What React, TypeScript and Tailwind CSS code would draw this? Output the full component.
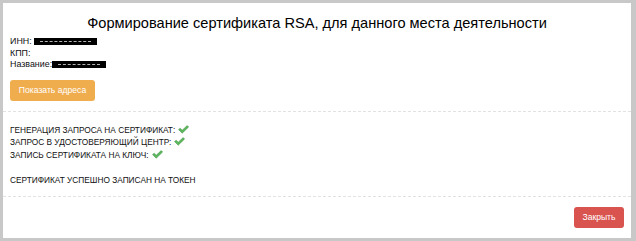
import React from 'react';

const font = { fontFamily: '"Liberation Sans", Tahoma, Arial, sans-serif' };

function Check() {
  return (
    <svg width="11" height="9" viewBox="0 0 11 9" className="inline-block ml-[3px] align-[-1px]">
      <path d="M0.5 4.6 L2.2 3.2 L4.2 5.2 L9.2 0.6 L10.6 2 L4.2 8.2 Z" fill="#5cb85c" stroke="#3d8b3d" strokeWidth="0.5" />
    </svg>
  );
}

function Redacted({ w }: { w: number }) {
  return (
    <span className="inline-block relative bg-black h-[7px] align-[-0.5px]" style={{ width: w }}>
      <span className="absolute left-[6px] right-[6px] top-[3px] h-0 border-t border-dashed border-white/70" />
    </span>
  );
}

const steps = [
  'ГЕНЕРАЦИЯ ЗАПРОСА НА СЕРТИФИКАТ:',
  'ЗАПРОС В УДОСТОВЕРЯЮЩИЙ ЦЕНТР:',
  'ЗАПИСЬ СЕРТИФИКАТА НА КЛЮЧ:',
];

export default function App() {
  return (
    <div className="w-[636px] h-[241px] bg-[#c8c8c8] pt-[3px] pl-[3px] pr-[5px] pb-[3px]" style={font}>
      <div className="bg-white h-full flex flex-col text-[#111]">
        <div className="px-[7px] pt-[10px] pb-[10px] border-b border-dashed border-[#e2e2e2]">
          <h1 className="text-center text-[14.6px] leading-[20px] text-black">
            Формирование сертификата RSA, для данного места деятельности
          </h1>
          <div className="mt-[3px] text-[8.9px] leading-[11.5px]">
            <div>ИНН: <Redacted w={63} /></div>
            <div>КПП:</div>
            <div>Название:<Redacted w={54} /></div>
          </div>
          <button className="mt-[9px] h-[21px] w-[85px] rounded-[3px] bg-[#f0ad4e] text-white text-[8.6px]">
            Показать адреса
          </button>
        </div>
        <div className="flex-1 px-[7px] pt-[12px] text-[8.3px] leading-[12.5px] border-b border-dashed border-[#e2e2e2]">
          {steps.map(s => (
            <div key={s}>{s}<Check /></div>
          ))}
          <div className="mt-[13px]">СЕРТИФИКАТ УСПЕШНО ЗАПИСАН НА ТОКЕН</div>
        </div>
        <div className="h-[41px] flex items-center justify-end pr-[7px]">
          <button className="h-[21px] w-[50px] rounded-[3px] bg-[#d9534f] text-white text-[8.6px]">
            Закрыть
          </button>
        </div>
      </div>
    </div>
  );
}
